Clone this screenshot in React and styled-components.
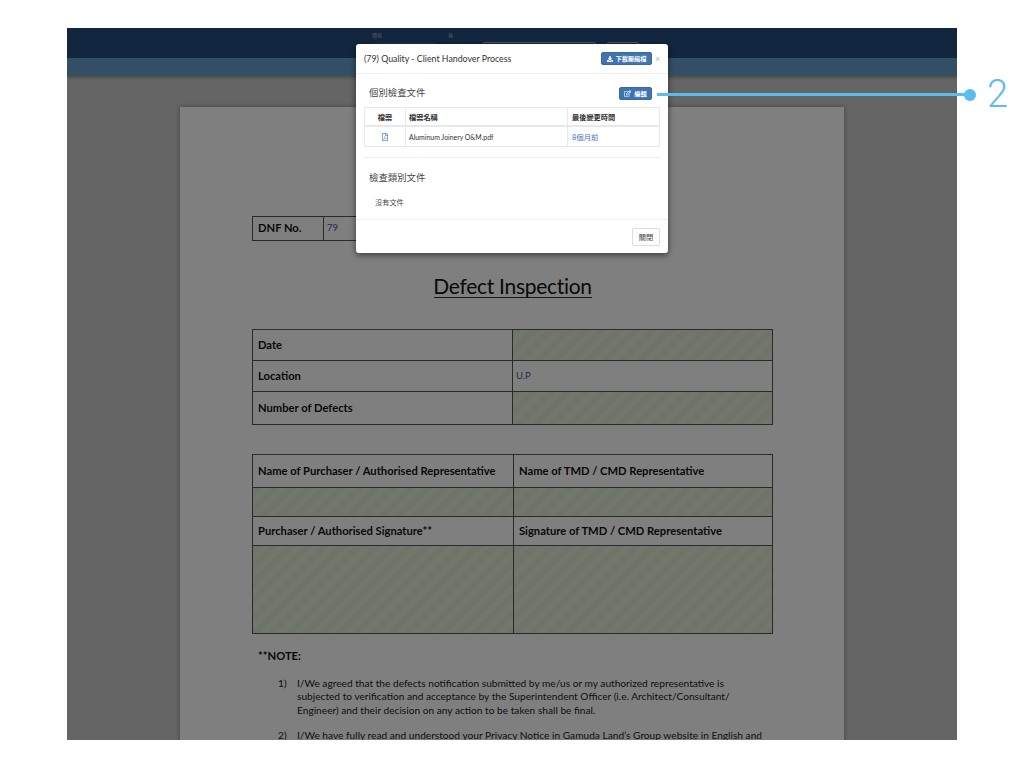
import styled, { createGlobalStyle } from "styled-components";
import { FaDownload, FaRegEdit, FaRegFilePdf } from "react-icons/fa";

const GlobalStyle = createGlobalStyle`
  html, body {
    margin: 0;
    padding: 0;
    background: #fff;
  }
  * {
    box-sizing: border-box;
  }
`;

const Stage = styled.div`
  position: relative;
  width: 1024px;
  height: 768px;
  padding: 28px 67px;
  overflow: hidden;
  font-family: "Lato", "Noto Sans CJK TC", sans-serif;
`;

const Frame = styled.div`
  position: relative;
  width: 890px;
  height: 712px;
  display: flex;
  flex-direction: column;
  overflow: hidden;
  background: #cbcbcb;
`;

const TopBar = styled.div`
  height: 30px;
  flex: none;
  display: flex;
  align-items: flex-end;
  padding-left: 305px;
  background: #264c7e;
`;

const BarField = styled.div`
  align-self: stretch;
  width: ${(p) => p.$w}px;
  margin-right: ${(p) => p.$gap}px;
  font-size: 5px;
  line-height: 14px;
  color: #9fb0c8;
`;

const BarInput = styled.div`
  height: 16px;
  background: #34598a;
`;

const BarButton = styled.div`
  width: ${(p) => p.$w}px;
  margin-right: ${(p) => p.$gap || 0}px;
  height: 16px;
  border: 1px solid #9fb0c8;
  border-radius: 2px;
`;

const SubBar = styled.div`
  height: 18px;
  flex: none;
  background: #689ecb;
  box-shadow: 0 2px 3px rgba(0, 0, 0, 0.25);
`;

const Workspace = styled.div`
  flex: 1;
  padding: 31px 113px 0;
`;

const Paper = styled.div`
  height: 700px;
  padding: 109px 71px 0 72px;
  background: #fff;
  box-shadow: 0 0 5px rgba(0, 0, 0, 0.35);
  color: #111;
  font-family: "Lato", sans-serif;
`;

const Grid = styled.div`
  display: grid;
  width: ${(p) => p.$w || 521}px;
  grid-template-columns: ${(p) => p.$cols || "260px 1fr"};
  grid-template-rows: ${(p) => p.$rows};
  margin-bottom: ${(p) => p.$mb || 0}px;
  border: 1px solid #555;
`;

const Cell = styled.div`
  display: flex;
  align-items: center;
  padding-left: ${(p) => (p.$value ? 3 : 5)}px;
  padding-bottom: 2px;
  border-right: ${(p) => (p.$last ? "0" : "1px solid #555")};
  border-bottom: ${(p) => (p.$end ? "0" : "1px solid #555")};
  font-size: ${(p) => (p.$value ? 9.5 : 11.2)}px;
  font-weight: ${(p) => (p.$value ? 400 : 700)};
  color: ${(p) => (p.$value ? "#3d5c92" : "#111")};
  background: ${(p) =>
    p.$fill
      ? "repeating-linear-gradient(135deg, #dde8d0 0 6px, #e4edd9 6px 12px)"
      : "transparent"};
`;

const Title = styled.h1`
  width: 158px;
  margin: 29px auto 31px;
  padding-top: 4px;
  border-bottom: 1px solid #333;
  font-size: 21px;
  line-height: 23px;
  font-weight: 400;
  letter-spacing: -0.3px;
  white-space: nowrap;
  color: #111;
  display: flex;
  justify-content: center;
`;

const NoteHead = styled.div`
  margin: 15px 0 0 6px;
  font-size: 11.2px;
  line-height: 14px;
  font-weight: 700;
`;

const NoteList = styled.ol`
  margin: 14px 0 0;
  padding: 0 10px 0 26px;
  list-style: none;
`;

const NoteItem = styled.li`
  display: flex;
  gap: 11px;
  margin-bottom: 12px;
  font-size: 10.17px;
  line-height: 13.4px;
  color: #222;
`;

const NoteNum = styled.span`
  flex: none;
  width: 8px;
`;

const Backdrop = styled.div`
  position: absolute;
  inset: 0;
  background: rgba(0, 0, 0, 0.5);
`;

const Modal = styled.div`
  position: absolute;
  left: 289px;
  top: 16px;
  width: 312px;
  height: 209px;
  display: flex;
  flex-direction: column;
  background: #fff;
  border-radius: 3px;
  box-shadow: 0 2px 6px rgba(0, 0, 0, 0.55);
  color: #333;
`;

const ModalHeader = styled.div`
  height: 30px;
  flex: none;
  display: flex;
  align-items: center;
  padding: 0 8px;
  border-bottom: 1px solid #eee;
  font-size: 8.8px;
`;

const ModalTitle = styled.div`
  flex: 1;
`;

const BlueButton = styled.div`
  display: flex;
  align-items: center;
  justify-content: center;
  gap: 3px;
  width: ${(p) => p.$w}px;
  height: 13px;
  background: #3f74b1;
  border: 1px solid #386aa4;
  border-radius: 2px;
  color: #fff;
  font-size: 6.2px;
  font-weight: 700;
`;

const Close = styled.span`
  width: 5px;
  margin-left: 3px;
  color: #c4c4c4;
  font-size: 9px;
  font-weight: 700;
  text-align: right;
`;

const ModalBody = styled.div`
  flex: 1;
  padding: 12px 8px 0;
`;

const SectionRow = styled.div`
  display: flex;
  align-items: center;
  justify-content: space-between;
  height: 14px;
  padding: 0 8px 0 5px;
  margin-bottom: 7px;
`;

const SectionTitle = styled.div`
  font-size: 9.4px;
  line-height: 14px;
  color: #444;
`;

const DocTable = styled.div`
  display: grid;
  grid-template-columns: 41px 162px 1fr;
  grid-template-rows: 19px 19px;
  width: 296px;
  border: 1px solid #e8e8e8;
`;

const DocCell = styled.div`
  display: flex;
  align-items: center;
  justify-content: ${(p) => (p.$center ? "center" : "flex-start")};
  padding-left: ${(p) => (p.$center ? 0 : p.$pad || 4)}px;
  border-right: ${(p) => (p.$last ? "0" : "1px solid #e8e8e8")};
  border-bottom: ${(p) => (p.$head ? "2px solid #e8e8e8" : "0")};
  font-size: ${(p) => (p.$head ? 7.2 : p.$size || 6.9)}px;
  font-weight: ${(p) => (p.$head ? 700 : 400)};
  color: ${(p) => p.$color || "#333"};
`;

const Rule = styled.div`
  height: 1px;
  margin: 10px 0 13px;
  background: #eee;
`;

const EmptyNote = styled.div`
  margin: 13px 0 0 11px;
  font-size: 7.2px;
  line-height: 10px;
  color: #444;
`;

const ModalFooter = styled.div`
  height: 34px;
  flex: none;
  display: flex;
  align-items: center;
  justify-content: flex-end;
  padding: 0 8px;
  border-top: 1px solid #eee;
`;

const GhostButton = styled.div`
  display: flex;
  align-items: center;
  justify-content: center;
  width: 28px;
  height: 18px;
  border: 1px solid #ddd;
  border-radius: 2px;
  font-size: 7.2px;
  color: #444;
`;

const Callout = styled.div`
  position: absolute;
  left: 657px;
  top: 87px;
  display: flex;
  align-items: center;
  height: 15px;
`;

const CalloutLine = styled.div`
  width: 308px;
  height: 3px;
  background: #5bbcf0;
`;

const CalloutDot = styled.div`
  width: 12px;
  height: 12px;
  margin-left: -1px;
  border-radius: 50%;
  background: #5bbcf0;
`;

const CalloutNum = styled.div`
  margin-left: 11px;
  font-family: "Roboto", "Liberation Sans", sans-serif;
  font-size: 38px;
  line-height: 15px;
  font-weight: 300;
  color: #5bbcf0;
`;

const notes = [
  {
    n: "1)",
    text: "I/We agreed that the defects notification submitted by me/us or my authorized representative is subjected to verification and acceptance by the Superintendent Officer (i.e. Architect/Consultant/ Engineer) and their decision on any action to be taken shall be final.",
  },
  {
    n: "2)",
    text: "I/We have fully read and understood your Privacy Notice in Gamuda Land’s Group website in English and",
  },
];

export default function App() {
  return (
    <Stage>
      <GlobalStyle />
      <Frame>
        <TopBar>
          <BarField $w={64} $gap={12}>
            價格
            <BarInput />
          </BarField>
          <BarField $w={11} $gap={24}>頁</BarField>
          <BarButton $w={113} $gap={11} />
          <BarButton $w={32} />
        </TopBar>
        <SubBar />
        <Workspace>
          <Paper>
            <Grid $w={105} $cols="71px 1fr" $rows="23px">
              <Cell $end>DNF No.</Cell>
              <Cell $value $last $end>79</Cell>
            </Grid>
            <Title>Defect Inspection</Title>
            <Grid $rows="31px 31px 32px" $mb={29}>
              <Cell>Date</Cell>
              <Cell $fill $last />
              <Cell>Location</Cell>
              <Cell $value $last>U.P</Cell>
              <Cell $end>Number of Defects</Cell>
              <Cell $fill $last $end />
            </Grid>
            <Grid $cols="261px 1fr" $rows="33px 29px 29px 87px">
              <Cell>Name of Purchaser / Authorised Representative</Cell>
              <Cell $last>Name of TMD / CMD Representative</Cell>
              <Cell $fill />
              <Cell $fill $last />
              <Cell>Purchaser / Authorised Signature**</Cell>
              <Cell $last>Signature of TMD / CMD Representative</Cell>
              <Cell $fill $end />
              <Cell $fill $last $end />
            </Grid>
            <NoteHead>**NOTE:</NoteHead>
            <NoteList>
              {notes.map((note) => (
                <NoteItem key={note.n}>
                  <NoteNum>{note.n}</NoteNum>
                  <span>{note.text}</span>
                </NoteItem>
              ))}
            </NoteList>
          </Paper>
        </Workspace>
        <Backdrop />
        <Modal>
          <ModalHeader>
            <ModalTitle>(79) Quality - Client Handover Process</ModalTitle>
            <BlueButton $w={51}>
              <FaDownload size={6} />
              下載壓縮檔
            </BlueButton>
            <Close>×</Close>
          </ModalHeader>
          <ModalBody>
            <SectionRow>
              <SectionTitle>個別檢查文件</SectionTitle>
              <BlueButton $w={33}>
                <FaRegEdit size={7} />
                編輯
              </BlueButton>
            </SectionRow>
            <DocTable>
              <DocCell $head $center>檔案</DocCell>
              <DocCell $head $pad={3}>檔案名稱</DocCell>
              <DocCell $head $last>最後變更時間</DocCell>
              <DocCell $center $color="#5d8ac0">
                <FaRegFilePdf size={8} />
              </DocCell>
              <DocCell $pad={3}>Aluminum Joinery O&amp;M.pdf</DocCell>
              <DocCell $last $color="#3f74b1" $size={7.4}>8個月前</DocCell>
            </DocTable>
            <Rule />
            <SectionRow>
              <SectionTitle>檢查類別文件</SectionTitle>
            </SectionRow>
            <EmptyNote>沒有文件</EmptyNote>
          </ModalBody>
          <ModalFooter>
            <GhostButton>關閉</GhostButton>
          </ModalFooter>
        </Modal>
      </Frame>
      <Callout>
        <CalloutLine />
        <CalloutDot />
        <CalloutNum>2</CalloutNum>
      </Callout>
    </Stage>
  );
}
